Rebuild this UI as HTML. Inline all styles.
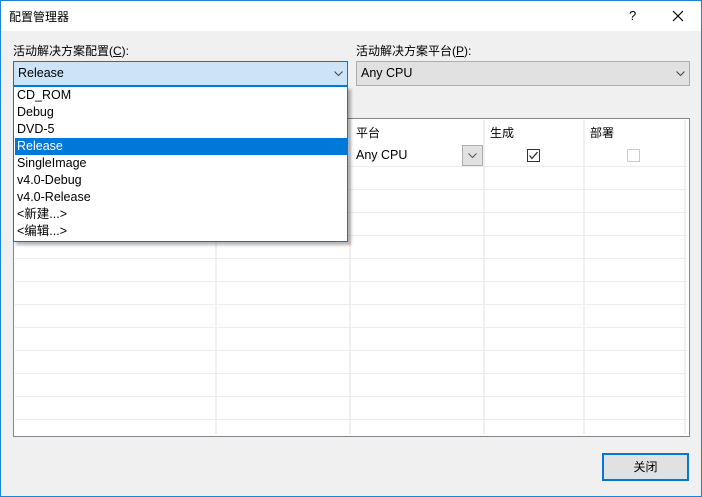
<!DOCTYPE html><html><head><meta charset="utf-8"><style>
*{margin:0;padding:0;box-sizing:border-box}
body{width:702px;height:497px;overflow:hidden;font-family:"Liberation Sans","Microsoft YaHei","Noto Sans CJK SC",sans-serif;font-size:12px;color:#000;position:relative;background:#f0f0f0}
.win{position:absolute;left:0;top:0;width:702px;height:497px;background:#f0f0f0}
.frame{position:absolute;left:0;top:0;width:702px;height:497px;border:1px solid #1883d7}
.abs{position:absolute}
.title{position:absolute;left:0;top:0;width:702px;height:31px;background:#fff}
.vl{position:absolute;width:2px;background:#eef0f4;top:120px;height:314px}
.hl{position:absolute;height:1px;background:#ececec;left:15px;width:672px}
.item{position:absolute;left:1px;width:332px;height:17px;line-height:17px;padding-left:2px;font-size:12.5px}
</style></head><body><div class="win">
<div class="title"></div>
<div class="abs" style="left:9px;top:8px;font-size:12px">配置管理器</div>
<div class="abs" style="left:629px;top:8px;font-size:13px">?</div>
<svg class="abs" style="left:672px;top:10px" width="12" height="12"><path d="M1 1L11 11M11 1L1 11" stroke="#000" stroke-width="1.2"/></svg>
<div class="abs" style="left:13px;top:42px">活动解决方案配置(<u>C</u>):</div>
<div class="abs" style="left:356px;top:42px">活动解决方案平台(<u>P</u>):</div>
<div class="abs" style="left:13px;top:61px;width:335px;height:25px;background:#cce4f7;border:1px solid #0078d7;padding:4px 0 0 4px;font-size:12.5px">Release</div>
<svg class="abs" style="left:334px;top:71px" width="10" height="6"><path d="M0.5 0.5L4.5 4.5L8.5 0.5" stroke="#444" fill="none"/></svg>
<div class="abs" style="left:356px;top:61px;width:334px;height:25px;background:#e1e1e1;border:1px solid #adadad;padding:4px 0 0 4px;font-size:12.5px">Any CPU</div>
<svg class="abs" style="left:676px;top:71px" width="10" height="6"><path d="M0.5 0.5L4.5 4.5L8.5 0.5" stroke="#444" fill="none"/></svg>
<div class="abs" style="left:13px;top:118px;width:677px;height:319px;border:1px solid #828790;background:#fff"></div>
<div class="vl" style="left:215px"></div><div class="vl" style="left:349px"></div><div class="vl" style="left:483px"></div><div class="vl" style="left:583px"></div><div class="vl" style="left:684px"></div>
<div class="hl" style="top:166px"></div><div class="hl" style="top:189px"></div><div class="hl" style="top:212px"></div><div class="hl" style="top:235px"></div><div class="hl" style="top:258px"></div><div class="hl" style="top:281px"></div><div class="hl" style="top:304px"></div><div class="hl" style="top:327px"></div><div class="hl" style="top:350px"></div><div class="hl" style="top:373px"></div><div class="hl" style="top:396px"></div><div class="hl" style="top:419px"></div>
<div class="abs" style="left:356px;top:124px">平台</div>
<div class="abs" style="left:490px;top:124px">生成</div>
<div class="abs" style="left:590px;top:124px">部署</div>
<div class="abs" style="left:356px;top:148px;font-size:12.5px">Any CPU</div>
<div class="abs" style="left:462px;top:145px;width:21px;height:21px;background:#e1e1e1;border:1px solid #adadad"></div>
<svg class="abs" style="left:468px;top:153px" width="10" height="6"><path d="M0.5 0.5L4.5 4.5L8.5 0.5" stroke="#555" fill="none"/></svg>
<div class="abs" style="left:527px;top:149px;width:13px;height:13px;border:1px solid #333;background:#fff"></div>
<svg class="abs" style="left:528px;top:150px" width="11" height="11"><path d="M1.5 5.5L4 8.5L9.5 2" stroke="#222" fill="none" stroke-width="1.2"/></svg>
<div class="abs" style="left:627px;top:149px;width:13px;height:13px;border:1px solid #ccc;background:#fff"></div>
<div class="abs" style="left:13px;top:86px;width:335px;height:156px;background:#fff;border:1px solid #0078d7;box-shadow:3px 3px 3px rgba(0,0,0,.3)">
<div class="item" style="top:0">CD_ROM</div>
<div class="item" style="top:17px">Debug</div>
<div class="item" style="top:34px">DVD-5</div>
<div class="item" style="top:51px;background:#0078d7;color:#fff">Release</div>
<div class="item" style="top:68px">SingleImage</div>
<div class="item" style="top:85px">v4.0-Debug</div>
<div class="item" style="top:102px">v4.0-Release</div>
<div class="item" style="top:119px">&lt;新建...&gt;</div>
<div class="item" style="top:136px">&lt;编辑...&gt;</div>
</div>
<div class="abs" style="left:602px;top:453px;width:87px;height:28px;background:#e1e1e1;border:2px solid #0078d7;text-align:center;line-height:24px">关闭</div>
</div><div class="frame"></div></body></html>
